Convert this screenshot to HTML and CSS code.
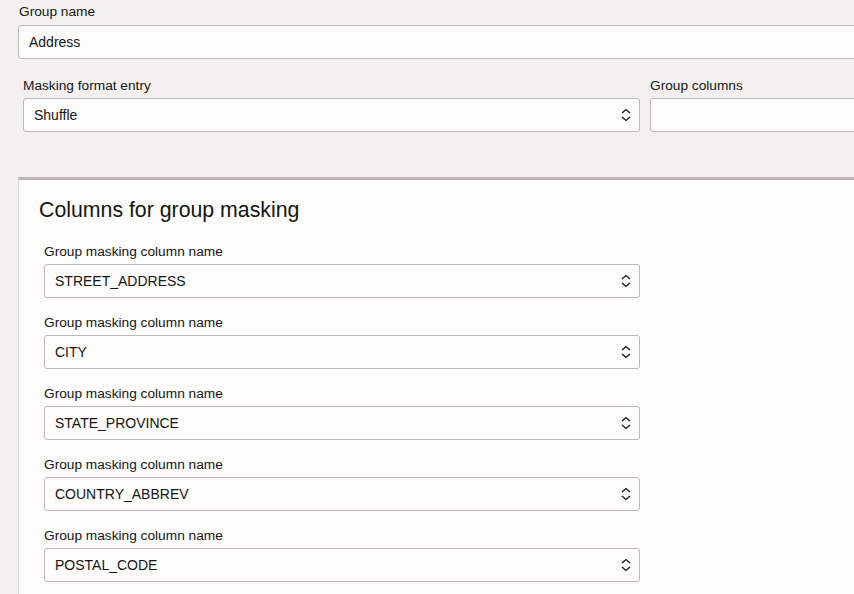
FILE: index.html
```html
<!DOCTYPE html>
<html lang="en">
<head>
<meta charset="utf-8">
<title>Group masking</title>
<link rel="stylesheet" href="styles.css">
</head>
<body>
<div class="page">
  <div class="field group-name">
    <label class="label">Group name</label>
    <div class="input">Address</div>
  </div>
  <div class="row">
    <div class="field format">
      <label class="label">Masking format entry</label>
      <div class="input select">Shuffle
        <svg class="chev" width="12" height="14" viewBox="0 0 12 14"><path d="M2 5 L6 1.5 L10 5 M2 9 L6 12.5 L10 9" fill="none" stroke="#161513" stroke-width="1.3"/></svg>
      </div>
    </div>
    <div class="field columns">
      <label class="label">Group columns</label>
      <div class="input"></div>
    </div>
  </div>
  <section class="panel">
    <h2 class="panel-title">Columns for group masking</h2>
    <div class="list">
      <div class="field item">
        <label class="label">Group masking column name</label>
        <div class="input select">STREET_ADDRESS
          <svg class="chev" width="12" height="14" viewBox="0 0 12 14"><path d="M2 5 L6 1.5 L10 5 M2 9 L6 12.5 L10 9" fill="none" stroke="#161513" stroke-width="1.3"/></svg>
        </div>
      </div>
      <div class="field item">
        <label class="label">Group masking column name</label>
        <div class="input select">CITY
          <svg class="chev" width="12" height="14" viewBox="0 0 12 14"><path d="M2 5 L6 1.5 L10 5 M2 9 L6 12.5 L10 9" fill="none" stroke="#161513" stroke-width="1.3"/></svg>
        </div>
      </div>
      <div class="field item">
        <label class="label">Group masking column name</label>
        <div class="input select">STATE_PROVINCE
          <svg class="chev" width="12" height="14" viewBox="0 0 12 14"><path d="M2 5 L6 1.5 L10 5 M2 9 L6 12.5 L10 9" fill="none" stroke="#161513" stroke-width="1.3"/></svg>
        </div>
      </div>
      <div class="field item">
        <label class="label">Group masking column name</label>
        <div class="input select">COUNTRY_ABBREV
          <svg class="chev" width="12" height="14" viewBox="0 0 12 14"><path d="M2 5 L6 1.5 L10 5 M2 9 L6 12.5 L10 9" fill="none" stroke="#161513" stroke-width="1.3"/></svg>
        </div>
      </div>
      <div class="field item">
        <label class="label">Group masking column name</label>
        <div class="input select">POSTAL_CODE
          <svg class="chev" width="12" height="14" viewBox="0 0 12 14"><path d="M2 5 L6 1.5 L10 5 M2 9 L6 12.5 L10 9" fill="none" stroke="#161513" stroke-width="1.3"/></svg>
        </div>
      </div>
    </div>
  </section>
</div>
</body>
</html>
```

FILE: styles.css
```css
html, body {
  margin: 0;
  padding: 0;
  background: #f2f1f0;
  overflow: hidden;
  height: 594px;
}
body {
  font-family: "Liberation Sans", Arial, sans-serif;
  color: #161513;
}
.page {
  width: 1400px;
  padding: 3px 0 0 18px;
}
.field {
  display: flex;
  flex-direction: column;
}
.label {
  font-size: 13.7px;
  line-height: 17px;
  color: #161513;
  margin-bottom: 4px;
}
.group-name .label {
  margin-left: 1px;
  margin-bottom: 5px;
}
.input {
  box-sizing: border-box;
  height: 34px;
  border: 1px solid #bcb8b3;
  border-radius: 3px;
  background: #fcfcfb;
  font-size: 14px;
  line-height: 32px;
  padding: 0 10px;
  display: flex;
  align-items: center;
  justify-content: space-between;
  white-space: nowrap;
}
.chev {
  margin-right: -3px;
  flex: none;
}
.row {
  display: flex;
  gap: 10px;
  margin-top: 18px;
  padding-left: 5px;
}
.format {
  width: 617px;
}
.columns {
  width: 620px;
}
.panel {
  margin-top: 45px;
  border-top: 3px solid #bcb7b2;
  border-left: 1px solid #d9d6d3;
  background: #fcfcfb;
  padding: 18px 0 40px 20px;
}
.panel-title {
  margin: 0;
  font-weight: normal;
  font-size: 21.3px;
  line-height: 25px;
}
.list {
  display: flex;
  flex-direction: column;
  gap: 16px;
  margin-top: 20px;
  padding-left: 5px;
}
.item {
  width: 596px;
}
```
